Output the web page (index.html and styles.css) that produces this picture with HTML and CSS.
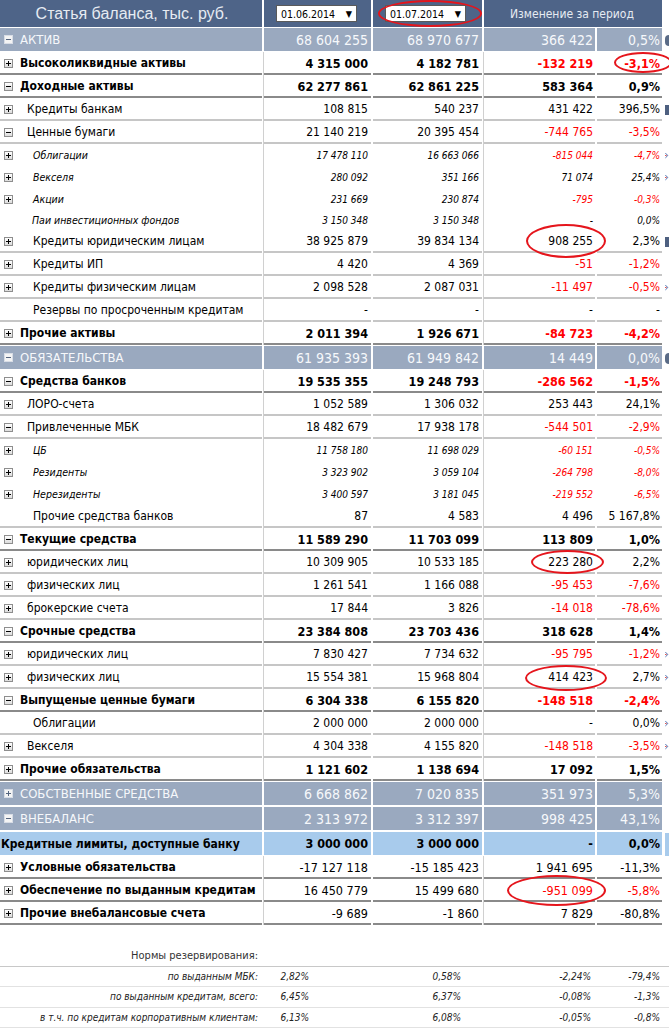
FILE: index.html
```html
<!DOCTYPE html>
<html lang="ru">
<head>
<meta charset="utf-8">
<title>Баланс</title>
<link rel="stylesheet" href="styles.css">
</head>
<body>
<div class="sheet">
  <div class="row head">
    <div class="c title">Статья баланса, тыс. руб.</div>
    <div class="c d1"><div class="date"><span>01.06.2014</span><span class="arr">▼</span></div></div>
    <div class="c d2"><div class="date"><span>01.07.2014</span><span class="arr">▼</span></div></div>
    <div class="c chg">Изменение за период</div>
  </div>

  <div class="row grp first">
    <div class="c lab"><i class="ic m"></i><span class="t">АКТИВ</span></div>
    <div class="c n">68 604 255</div><div class="c n">68 970 677</div><div class="c n">366 422</div><div class="c n">0,5%</div>
    <div class="s"><span class="dot"></span></div>
  </div>
  <div class="row b l0">
    <div class="c lab"><i class="ic p"></i><span class="t">Высоколиквидные активы</span></div>
    <div class="c n">4 315 000</div><div class="c n">4 182 781</div><div class="c n neg">-132 219</div><div class="c n neg">-3,1%</div>
    <div class="s"></div>
  </div>
  <div class="row b l0">
    <div class="c lab"><i class="ic m"></i><span class="t">Доходные активы</span></div>
    <div class="c n">62 277 861</div><div class="c n">62 861 225</div><div class="c n">583 364</div><div class="c n">0,9%</div>
    <div class="s"></div>
  </div>
  <div class="row std l1">
    <div class="c lab"><i class="ic p"></i><span class="t">Кредиты банкам</span></div>
    <div class="c n">108 815</div><div class="c n">540 237</div><div class="c n">431 422</div><div class="c n">396,5%</div>
    <div class="s"><span class="bar"></span></div>
  </div>
  <div class="row std l1">
    <div class="c lab"><i class="ic m"></i><span class="t">Ценные бумаги</span></div>
    <div class="c n">21 140 219</div><div class="c n">20 395 454</div><div class="c n neg">-744 765</div><div class="c n neg">-3,5%</div>
    <div class="s"></div>
  </div>
  <div class="row it l2">
    <div class="c lab"><i class="ic p"></i><span class="t">Облигации</span></div>
    <div class="c n">17 478 110</div><div class="c n">16 663 066</div><div class="c n neg">-815 044</div><div class="c n neg">-4,7%</div>
    <div class="s"><svg class="go" width="5" height="7" viewBox="0 0 5 7"><path d="M0.5 0.5 L3.5 3.5 L0.5 6.5" fill="none" stroke="#4466aa" stroke-width="1.2"/><rect x="0" y="3" width="2" height="1" fill="#d03030"/></svg></div>
  </div>
  <div class="row it l2">
    <div class="c lab"><i class="ic p"></i><span class="t">Векселя</span></div>
    <div class="c n">280 092</div><div class="c n">351 166</div><div class="c n">71 074</div><div class="c n">25,4%</div>
    <div class="s"><svg class="go" width="5" height="7" viewBox="0 0 5 7"><path d="M0.5 0.5 L3.5 3.5 L0.5 6.5" fill="none" stroke="#4466aa" stroke-width="1.2"/><rect x="0" y="3" width="2" height="1" fill="#d03030"/></svg></div>
  </div>
  <div class="row it l2">
    <div class="c lab"><i class="ic p"></i><span class="t">Акции</span></div>
    <div class="c n">231 669</div><div class="c n">230 874</div><div class="c n neg">-795</div><div class="c n neg">-0,3%</div>
    <div class="s"></div>
  </div>
  <div class="row it short">
    <div class="c lab noic"><span class="t">Паи инвестиционных фондов</span></div>
    <div class="c n">3 150 348</div><div class="c n">3 150 348</div><div class="c n">-</div><div class="c n">0,0%</div>
    <div class="s"></div>
  </div>
  <div class="row std l2">
    <div class="c lab"><i class="ic p"></i><span class="t">Кредиты юридическим лицам</span></div>
    <div class="c n">38 925 879</div><div class="c n">39 834 134</div><div class="c n">908 255</div><div class="c n">2,3%</div>
    <div class="s"><span class="bar"></span></div>
  </div>
  <div class="row std l2">
    <div class="c lab"><i class="ic p"></i><span class="t">Кредиты ИП</span></div>
    <div class="c n">4 420</div><div class="c n">4 369</div><div class="c n neg">-51</div><div class="c n neg">-1,2%</div>
    <div class="s"></div>
  </div>
  <div class="row std l2">
    <div class="c lab"><i class="ic p"></i><span class="t">Кредиты физическим лицам</span></div>
    <div class="c n">2 098 528</div><div class="c n">2 087 031</div><div class="c n neg">-11 497</div><div class="c n neg">-0,5%</div>
    <div class="s"><svg class="go" width="5" height="7" viewBox="0 0 5 7"><path d="M0.5 0.5 L3.5 3.5 L0.5 6.5" fill="none" stroke="#4466aa" stroke-width="1.2"/><rect x="0" y="3" width="2" height="1" fill="#d03030"/></svg></div>
  </div>
  <div class="row std">
    <div class="c lab noic"><span class="t">Резервы по просроченным кредитам</span></div>
    <div class="c n">-</div><div class="c n">-</div><div class="c n">-</div><div class="c n">-</div>
    <div class="s"></div>
  </div>
  <div class="row b l0">
    <div class="c lab"><i class="ic p"></i><span class="t">Прочие активы</span></div>
    <div class="c n">2 011 394</div><div class="c n">1 926 671</div><div class="c n neg">-84 723</div><div class="c n neg">-4,2%</div>
    <div class="s"></div>
  </div>

  <div class="row grp">
    <div class="c lab"><i class="ic m"></i><span class="t">ОБЯЗАТЕЛЬСТВА</span></div>
    <div class="c n">61 935 393</div><div class="c n">61 949 842</div><div class="c n">14 449</div><div class="c n">0,0%</div>
    <div class="s"><span class="dot"></span></div>
  </div>
  <div class="row b l0">
    <div class="c lab"><i class="ic m"></i><span class="t">Средства банков</span></div>
    <div class="c n">19 535 355</div><div class="c n">19 248 793</div><div class="c n neg">-286 562</div><div class="c n neg">-1,5%</div>
    <div class="s"></div>
  </div>
  <div class="row std l1">
    <div class="c lab"><i class="ic p"></i><span class="t">ЛОРО-счета</span></div>
    <div class="c n">1 052 589</div><div class="c n">1 306 032</div><div class="c n">253 443</div><div class="c n">24,1%</div>
    <div class="s"></div>
  </div>
  <div class="row std l1">
    <div class="c lab"><i class="ic m"></i><span class="t">Привлеченные МБК</span></div>
    <div class="c n">18 482 679</div><div class="c n">17 938 178</div><div class="c n neg">-544 501</div><div class="c n neg">-2,9%</div>
    <div class="s"></div>
  </div>
  <div class="row it l2">
    <div class="c lab"><i class="ic p"></i><span class="t">ЦБ</span></div>
    <div class="c n">11 758 180</div><div class="c n">11 698 029</div><div class="c n neg">-60 151</div><div class="c n neg">-0,5%</div>
    <div class="s"></div>
  </div>
  <div class="row it l2">
    <div class="c lab"><i class="ic p"></i><span class="t">Резиденты</span></div>
    <div class="c n">3 323 902</div><div class="c n">3 059 104</div><div class="c n neg">-264 798</div><div class="c n neg">-8,0%</div>
    <div class="s"></div>
  </div>
  <div class="row it l2">
    <div class="c lab"><i class="ic p"></i><span class="t">Нерезиденты</span></div>
    <div class="c n">3 400 597</div><div class="c n">3 181 045</div><div class="c n neg">-219 552</div><div class="c n neg">-6,5%</div>
    <div class="s"></div>
  </div>
  <div class="row std">
    <div class="c lab noic"><span class="t">Прочие средства банков</span></div>
    <div class="c n">87</div><div class="c n">4 583</div><div class="c n">4 496</div><div class="c n">5 167,8%</div>
    <div class="s"></div>
  </div>
  <div class="row b l0">
    <div class="c lab"><i class="ic m"></i><span class="t">Текущие средства</span></div>
    <div class="c n">11 589 290</div><div class="c n">11 703 099</div><div class="c n">113 809</div><div class="c n">1,0%</div>
    <div class="s"></div>
  </div>
  <div class="row std l1">
    <div class="c lab"><i class="ic p"></i><span class="t">юридических лиц</span></div>
    <div class="c n">10 309 905</div><div class="c n">10 533 185</div><div class="c n">223 280</div><div class="c n">2,2%</div>
    <div class="s"></div>
  </div>
  <div class="row std l1">
    <div class="c lab"><i class="ic p"></i><span class="t">физических лиц</span></div>
    <div class="c n">1 261 541</div><div class="c n">1 166 088</div><div class="c n neg">-95 453</div><div class="c n neg">-7,6%</div>
    <div class="s"></div>
  </div>
  <div class="row std l1">
    <div class="c lab"><i class="ic p"></i><span class="t">брокерские счета</span></div>
    <div class="c n">17 844</div><div class="c n">3 826</div><div class="c n neg">-14 018</div><div class="c n neg">-78,6%</div>
    <div class="s"></div>
  </div>
  <div class="row b l0">
    <div class="c lab"><i class="ic m"></i><span class="t">Срочные средства</span></div>
    <div class="c n">23 384 808</div><div class="c n">23 703 436</div><div class="c n">318 628</div><div class="c n">1,4%</div>
    <div class="s"></div>
  </div>
  <div class="row std l1">
    <div class="c lab"><i class="ic p"></i><span class="t">юридических лиц</span></div>
    <div class="c n">7 830 427</div><div class="c n">7 734 632</div><div class="c n neg">-95 795</div><div class="c n neg">-1,2%</div>
    <div class="s"><svg class="go" width="5" height="7" viewBox="0 0 5 7"><path d="M0.5 0.5 L3.5 3.5 L0.5 6.5" fill="none" stroke="#4466aa" stroke-width="1.2"/><rect x="0" y="3" width="2" height="1" fill="#d03030"/></svg></div>
  </div>
  <div class="row std l1">
    <div class="c lab"><i class="ic p"></i><span class="t">физических лиц</span></div>
    <div class="c n">15 554 381</div><div class="c n">15 968 804</div><div class="c n">414 423</div><div class="c n">2,7%</div>
    <div class="s"><svg class="go" width="5" height="7" viewBox="0 0 5 7"><path d="M0.5 0.5 L3.5 3.5 L0.5 6.5" fill="none" stroke="#4466aa" stroke-width="1.2"/><rect x="0" y="3" width="2" height="1" fill="#d03030"/></svg></div>
  </div>
  <div class="row b l0">
    <div class="c lab"><i class="ic m"></i><span class="t">Выпущеные ценные бумаги</span></div>
    <div class="c n">6 304 338</div><div class="c n">6 155 820</div><div class="c n neg">-148 518</div><div class="c n neg">-2,4%</div>
    <div class="s"></div>
  </div>
  <div class="row std">
    <div class="c lab noic"><span class="t">Облигации</span></div>
    <div class="c n">2 000 000</div><div class="c n">2 000 000</div><div class="c n">-</div><div class="c n">0,0%</div>
    <div class="s"><svg class="go" width="5" height="7" viewBox="0 0 5 7"><path d="M0.5 0.5 L3.5 3.5 L0.5 6.5" fill="none" stroke="#4466aa" stroke-width="1.2"/><rect x="0" y="3" width="2" height="1" fill="#d03030"/></svg></div>
  </div>
  <div class="row std l1">
    <div class="c lab"><i class="ic p"></i><span class="t">Векселя</span></div>
    <div class="c n">4 304 338</div><div class="c n">4 155 820</div><div class="c n neg">-148 518</div><div class="c n neg">-3,5%</div>
    <div class="s"><svg class="go" width="5" height="7" viewBox="0 0 5 7"><path d="M0.5 0.5 L3.5 3.5 L0.5 6.5" fill="none" stroke="#4466aa" stroke-width="1.2"/><rect x="0" y="3" width="2" height="1" fill="#d03030"/></svg></div>
  </div>
  <div class="row b l0">
    <div class="c lab"><i class="ic p"></i><span class="t">Прочие обязательства</span></div>
    <div class="c n">1 121 602</div><div class="c n">1 138 694</div><div class="c n">17 092</div><div class="c n">1,5%</div>
    <div class="s"></div>
  </div>

  <div class="row grp">
    <div class="c lab"><i class="ic p"></i><span class="t">СОБСТВЕННЫЕ СРЕДСТВА</span></div>
    <div class="c n">6 668 862</div><div class="c n">7 020 835</div><div class="c n">351 973</div><div class="c n">5,3%</div>
    <div class="s"></div>
  </div>
  <div class="row grp">
    <div class="c lab"><i class="ic m"></i><span class="t">ВНЕБАЛАНС</span></div>
    <div class="c n">2 313 972</div><div class="c n">3 312 397</div><div class="c n">998 425</div><div class="c n">43,1%</div>
    <div class="s"></div>
  </div>
  <div class="row lim">
    <div class="c lab"><span class="t">Кредитные лимиты, доступные банку</span></div>
    <div class="c n">3 000 000</div><div class="c n">3 000 000</div><div class="c n">-</div><div class="c n">0,0%</div>
    <div class="s"><span class="lbar"></span></div>
  </div>
  <div class="row b l0 rv">
    <div class="c lab"><i class="ic p"></i><span class="t">Условные обязательства</span></div>
    <div class="c n">-17 127 118</div><div class="c n">-15 185 423</div><div class="c n">1 941 695</div><div class="c n">-11,3%</div>
    <div class="s"></div>
  </div>
  <div class="row b l0 rv">
    <div class="c lab"><i class="ic p"></i><span class="t">Обеспечение по выданным кредитам</span></div>
    <div class="c n">16 450 779</div><div class="c n">15 499 680</div><div class="c n neg">-951 099</div><div class="c n neg">-5,8%</div>
    <div class="s"></div>
  </div>
  <div class="row b l0 rv">
    <div class="c lab"><i class="ic p"></i><span class="t">Прочие внебалансовые счета</span></div>
    <div class="c n">-9 689</div><div class="c n">-1 860</div><div class="c n">7 829</div><div class="c n">-80,8%</div>
    <div class="s"></div>
  </div>

  <div class="norms">
    <div class="nrow ntitle"><div class="nl">Нормы резервирования:</div></div>
    <div class="nrow">
      <div class="nl">по выданным МБК:</div><div class="nv v2">2,82%</div><div class="nv v3">0,58%</div><div class="nv v4">-2,24%</div><div class="nv v5">-79,4%</div>
    </div>
    <div class="nrow">
      <div class="nl">по выданным кредитам, всего:</div><div class="nv v2">6,45%</div><div class="nv v3">6,37%</div><div class="nv v4">-0,08%</div><div class="nv v5">-1,3%</div>
    </div>
    <div class="nrow">
      <div class="nl">в т.ч. по кредитам корпоративным клиентам:</div><div class="nv v2">6,13%</div><div class="nv v3">6,08%</div><div class="nv v4">-0,05%</div><div class="nv v5">-0,8%</div>
    </div>
  </div>

  <span class="ring r1"></span>
  <span class="ring r2"></span>
  <span class="ring r3"></span>
  <span class="ring r4"></span>
  <span class="ring r5"></span>
  <span class="ring r6"></span>
</div>
</body>
</html>
```

FILE: styles.css
```css
* { box-sizing: border-box; }

html, body {
  margin: 0;
  padding: 0;
  background: #ffffff;
  overflow: hidden;
}

body {
  font-family: "DejaVu Sans Condensed", "DejaVu Sans", sans-serif;
  font-stretch: condensed;
  font-size: 12px;
  color: #000;
}

.sheet {
  position: relative;
  width: 669px;
}

.row {
  display: grid;
  grid-template-columns: 262px 107px 109px 111px 65px 5px;
  column-gap: 2px;
}

.c {
  display: flex;
  align-items: center;
  white-space: nowrap;
  overflow: hidden;
}

.n {
  justify-content: flex-end;
  padding-right: 3px;
}
.row .c:nth-child(4),
.row .c:nth-child(5) { padding-right: 2px; }

.s {
  display: flex;
  align-items: center;
  overflow: visible;
}

/* header */
.head { height: 28px; }
.head .c {
  height: 27px;
  background: #4e6488;
  color: #e6ebf2;
}
.head .title {
  justify-content: center;
  font-family: "Liberation Sans", sans-serif;
  font-stretch: normal;
  font-size: 16px;
  padding-left: 2px;
}
.head .d1 { padding-left: 12px; }
.head .d2 { padding-left: 12px; }
.head .chg {
  grid-column: span 2;
  justify-content: center;
  font-size: 12px;
}
.date {
  width: 81px;
  height: 17px;
  background: #fff;
  border: 1px solid #5a5a5a;
  color: #000;
  font-size: 10.5px;
  display: flex;
  align-items: center;
  justify-content: space-between;
  padding: 0 4px 0 4px;
}
.date .arr { font-size: 9px; }

/* label cell */
.lab { padding-left: 4px; }
.lab.noic { padding-left: 33px; }
.l0 .t { margin-left: 7px; }
.l1 .t { margin-left: 14px; }
.l2 .t { margin-left: 20px; }
.grp .t { margin-left: 7px; }

.ic {
  position: relative;
  flex: none;
  width: 9px;
  height: 9px;
  border: 1px solid #8e8e8e;
  background: linear-gradient(#ffffff, #dcdcdc);
}
.ic::before {
  content: "";
  position: absolute;
  left: 1px;
  top: 3px;
  width: 5px;
  height: 1px;
  background: #000;
}
.ic.p::after {
  content: "";
  position: absolute;
  left: 3px;
  top: 1px;
  width: 1px;
  height: 5px;
  background: #000;
}

/* standard rows */
.std, .b, .it {
  background:
    linear-gradient(#d0d0d0, #d0d0d0) 263px 0 / 1px 100% no-repeat,
    linear-gradient(#d0d0d0, #d0d0d0) 483px 0 / 1px 100% no-repeat;
}
.std { height: 23px; }
.std .c { height: 23px; padding-top: 1px; border-bottom: 2px solid #c6c6c6; }

.b { height: 23px; }
.b .c { height: 23px; padding-top: 1px; border-bottom: 2px solid #8a8a8a; font-weight: bold; }
.b .n { font-size: 12.5px; }
.rv .n { font-weight: normal; font-size: 12.5px; }

.it { height: 22px; }
.it.short { height: 20px; }
.it .c { height: 100%; font-style: italic; font-size: 10px; }
.it .lab { font-size: 10.5px; }
.it .noic { padding-left: 32px; }

.neg { color: #ff0000; }

/* group rows */
.grp { margin-top: 1px; height: 24px; }
.grp.first { margin-top: 0; }
.grp .c {
  height: 23px;
  background: #9aa9bf;
  color: #f6f8fb;
  font-size: 13px;
}
.grp .n { font-size: 14px; }
.grp .ic {
  background: #f4f4f4;
  border-color: #d8dde6;
}
.grp .ic::before, .grp .ic::after { background: #55657f; }

.dot {
  width: 6px;
  height: 11px;
  margin-left: 1px;
  border-radius: 6px 0 0 6px;
  background: #5a6b86;
}
.bar {
  width: 4px;
  height: 10px;
  margin-left: 1px;
  background: #4e6080;
}
.lbar {
  width: 4px;
  height: 23px;
  margin-left: 1px;
  background: #a8cbec;
}
.go { margin-left: 1px; }

/* light-blue limit row */
.lim { margin-top: 1px; height: 24px; }
.lim .c {
  height: 23px;
  background: #a8cbec;
  font-weight: bold;
}
.lim .lab { padding-left: 1px; }
.lim .n { font-size: 12.5px; }

/* reserve norms */
.norms {
  margin-top: 21px;
  font-style: italic;
  font-size: 10px;
  color: #222;
}
.nrow {
  display: grid;
  grid-template-columns: 262px 107px 109px 111px 65px;
  column-gap: 2px;
  height: 20.5px;
  align-items: center;
  border-bottom: 1px solid #e2e2e2;
}
.ntitle {
  font-style: normal;
  font-size: 11px;
  color: #333;
  border-bottom: 1px solid #c8c8c8;
}
.nl { text-align: right; padding-right: 4px; white-space: nowrap; }
.nv { text-align: right; white-space: nowrap; }
.v2 { padding-right: 62px; }
.v3 { padding-right: 21px; }
.v4 { padding-right: 4px; }
.v5 { padding-right: 2px; }

/* red annotation rings */
.ring {
  position: absolute;
  border: 2px solid #e5151c;
  border-radius: 50%;
  pointer-events: none;
}
.r1 { left: 378px; top: 0px; width: 104px; height: 27px; }
.r2 { left: 614px; top: 52px; width: 58px; height: 21px; }
.r3 { left: 526px; top: 224px; width: 80px; height: 34px; }
.r4 { left: 531px; top: 550px; width: 73px; height: 24px; }
.r5 { left: 525px; top: 665px; width: 82px; height: 26px; }
.r6 { left: 507px; top: 875px; width: 99px; height: 31px; }
```
